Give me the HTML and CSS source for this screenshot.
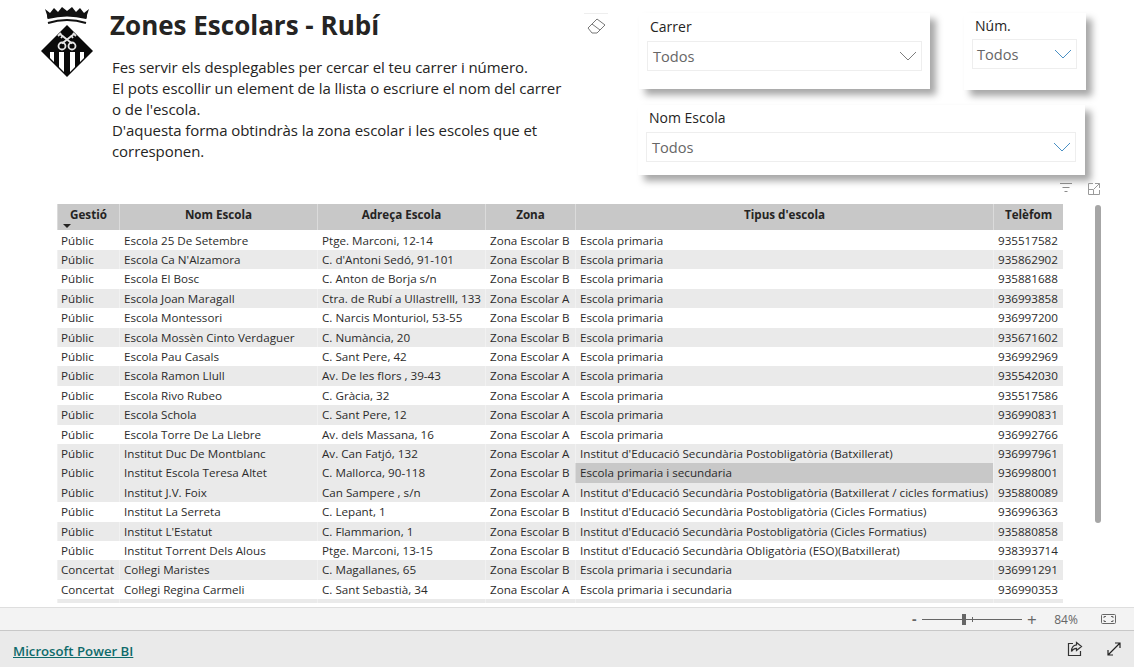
FILE: index.html
```html
<!DOCTYPE html>
<html lang="ca">
<head>
<meta charset="utf-8">
<title>Zones Escolars - Rubí</title>
<link rel="stylesheet" href="styles.css">
</head>
<body>
<main class="report">
  <section class="top">
    <svg class="logo" viewBox="0 0 52 72" width="52" height="72" aria-hidden="true">
      <path d="M6 9 L4 3 L9 7 L13 2 L17 6 L21 1 L26 5 L31 1 L35 6 L39 2 L43 7 L48 3 L46 9 Q46 13 45 13 Q26 8 7 13 Q6 13 6 9Z" fill="#111"/>
      <path d="M7 17 Q26 11 45 17" fill="none" stroke="#111" stroke-width="2"/>
      <path d="M26 19 L52 45 L26 71 L0 45Z" fill="#0a0a0a"/>
      <path d="M9 46H13V56L9 52Z M18 46H23V66L18 61Z M29 46H34V61L29 66Z M39 46H43V52L39 56Z" fill="#fff"/>
      <g fill="none" stroke="#e8e8e8" stroke-width="1.800">
        <path d="M31 37.500 L19 28 M21 37.500 L33 28"/>
        <circle cx="21" cy="40" r="3.500"/>
        <circle cx="31" cy="40" r="3.500"/>
        <path d="M17 30l3-3M35 30l-3-3M20 32l2-2.500M32 32l-2-2.500"/>
      </g>
    </svg>
    <div class="intro">
      <h1 class="title">Zones Escolars - Rubí</h1>
      <p class="lead">Fes servir els desplegables per cercar el teu carrer i número.<br>El pots escollir un element de la llista o escriure el nom del carrer<br>o de l'escola.<br>D'aquesta forma obtindràs la zona escolar i les escoles que et<br>corresponen.</p>
    </div>
    <div class="eraser">
      <svg viewBox="0 0 22 20" width="22" height="20" aria-hidden="true"><path d="M3 12 L12 3 L20 9 L12 17 H7Z M7 8 L15 14" fill="none" stroke="#777" stroke-width="1"/></svg>
    </div>
    <div class="slicers">
      <div class="slicer s-carrer">
        <div class="s-label">Carrer</div>
        <div class="s-box"><span>Todos</span><svg class="chev" viewBox="0 0 18 10" width="18" height="10" aria-hidden="true"><path d="M1 1 L9 9 L17 1" fill="none" stroke="#7d7d7d"/></svg></div>
      </div>
      <div class="slicer s-num">
        <div class="s-label">Núm.</div>
        <div class="s-box"><span>Todos</span><svg class="chev" viewBox="0 0 18 10" width="18" height="10" aria-hidden="true"><path d="M1 1 L9 9 L17 1" fill="none" stroke="#4a90c4"/></svg></div>
      </div>
      <div class="slicer s-nom">
        <div class="s-label">Nom Escola</div>
        <div class="s-box"><span>Todos</span><svg class="chev" viewBox="0 0 18 10" width="18" height="10" aria-hidden="true"><path d="M1 1 L9 9 L17 1" fill="none" stroke="#4a90c4"/></svg></div>
      </div>
    </div>
  </section>
  <div class="tools">
    <svg viewBox="0 0 14 12" width="14" height="12" aria-hidden="true"><path d="M1 1.500h12M3.500 5.500h7M5.500 9.500h3" stroke="#8a8a8a" fill="none"/></svg>
    <svg viewBox="0 0 14 14" width="14" height="14" aria-hidden="true"><path d="M6 1.500H1.500v11h11V8M8 1.500h4.500V6M12.500 1.500L7 7M1.500 7.500H6.500V12.500" stroke="#9a9a9a" fill="none"/></svg>
  </div>
  <section class="table-area">
    <div class="table">
      <div class="row head"><div class="c">Gestió<i class="sort"></i></div><div class="c">Nom Escola</div><div class="c">Adreça Escola</div><div class="c">Zona</div><div class="c">Tipus d'escola</div><div class="c">Telèfom</div></div>
      <div class="row"><div class="c">Públic</div><div class="c">Escola 25 De Setembre</div><div class="c">Ptge. Marconi, 12-14</div><div class="c">Zona Escolar B</div><div class="c">Escola primaria</div><div class="c">935517582</div></div>
      <div class="row"><div class="c">Públic</div><div class="c">Escola Ca N'Alzamora</div><div class="c">C. d'Antoni Sedó, 91-101</div><div class="c">Zona Escolar B</div><div class="c">Escola primaria</div><div class="c">935862902</div></div>
      <div class="row"><div class="c">Públic</div><div class="c">Escola El Bosc</div><div class="c">C. Anton de Borja s/n</div><div class="c">Zona Escolar B</div><div class="c">Escola primaria</div><div class="c">935881688</div></div>
      <div class="row"><div class="c">Públic</div><div class="c">Escola Joan Maragall</div><div class="c">Ctra. de Rubí a Ullastrelll, 133</div><div class="c">Zona Escolar A</div><div class="c">Escola primaria</div><div class="c">936993858</div></div>
      <div class="row"><div class="c">Públic</div><div class="c">Escola Montessori</div><div class="c">C. Narcis Monturiol, 53-55</div><div class="c">Zona Escolar B</div><div class="c">Escola primaria</div><div class="c">936997200</div></div>
      <div class="row"><div class="c">Públic</div><div class="c">Escola Mossèn Cinto Verdaguer</div><div class="c">C. Numància, 20</div><div class="c">Zona Escolar B</div><div class="c">Escola primaria</div><div class="c">935671602</div></div>
      <div class="row"><div class="c">Públic</div><div class="c">Escola Pau Casals</div><div class="c">C. Sant Pere, 42</div><div class="c">Zona Escolar A</div><div class="c">Escola primaria</div><div class="c">936992969</div></div>
      <div class="row"><div class="c">Públic</div><div class="c">Escola Ramon Llull</div><div class="c">Av. De les flors , 39-43</div><div class="c">Zona Escolar A</div><div class="c">Escola primaria</div><div class="c">935542030</div></div>
      <div class="row"><div class="c">Públic</div><div class="c">Escola Rivo Rubeo</div><div class="c">C. Gràcia, 32</div><div class="c">Zona Escolar A</div><div class="c">Escola primaria</div><div class="c">935517586</div></div>
      <div class="row"><div class="c">Públic</div><div class="c">Escola Schola</div><div class="c">C. Sant Pere, 12</div><div class="c">Zona Escolar A</div><div class="c">Escola primaria</div><div class="c">936990831</div></div>
      <div class="row"><div class="c">Públic</div><div class="c">Escola Torre De La Llebre</div><div class="c">Av. dels Massana, 16</div><div class="c">Zona Escolar A</div><div class="c">Escola primaria</div><div class="c">936992766</div></div>
      <div class="row"><div class="c">Públic</div><div class="c">Institut Duc De Montblanc</div><div class="c">Av. Can Fatjó, 132</div><div class="c">Zona Escolar A</div><div class="c">Institut d'Educació Secundària Postobligatòria (Batxillerat)</div><div class="c">936997961</div></div>
      <div class="row hover"><div class="c">Públic</div><div class="c">Institut Escola Teresa Altet</div><div class="c">C. Mallorca, 90-118</div><div class="c">Zona Escolar B</div><div class="c hot">Escola primaria i secundaria</div><div class="c">936998001</div></div>
      <div class="row"><div class="c">Públic</div><div class="c">Institut J.V. Foix</div><div class="c">Can Sampere , s/n</div><div class="c">Zona Escolar A</div><div class="c">Institut d'Educació Secundària Postobligatòria (Batxillerat / cicles formatius)</div><div class="c">935880089</div></div>
      <div class="row"><div class="c">Públic</div><div class="c">Institut La Serreta</div><div class="c">C. Lepant, 1</div><div class="c">Zona Escolar B</div><div class="c">Institut d'Educació Secundària Postobligatòria (Cicles Formatius)</div><div class="c">936996363</div></div>
      <div class="row"><div class="c">Públic</div><div class="c">Institut L'Estatut</div><div class="c">C. Flammarion, 1</div><div class="c">Zona Escolar B</div><div class="c">Institut d'Educació Secundària Postobligatòria (Cicles Formatius)</div><div class="c">935880858</div></div>
      <div class="row"><div class="c">Públic</div><div class="c">Institut Torrent Dels Alous</div><div class="c">Ptge. Marconi, 13-15</div><div class="c">Zona Escolar B</div><div class="c">Institut d'Educació Secundària Obligatòria (ESO)(Batxillerat)</div><div class="c">938393714</div></div>
      <div class="row"><div class="c">Concertat</div><div class="c">Col·legi Maristes</div><div class="c">C. Magallanes, 65</div><div class="c">Zona Escolar B</div><div class="c">Escola primaria i secundaria</div><div class="c">936991291</div></div>
      <div class="row"><div class="c">Concertat</div><div class="c">Col·legi Regina Carmeli</div><div class="c">C. Sant Sebastià, 34</div><div class="c">Zona Escolar A</div><div class="c">Escola primaria i secundaria</div><div class="c">936990353</div></div>
      <div class="row stub"><div class="c"></div><div class="c"></div><div class="c"></div><div class="c"></div><div class="c"></div><div class="c"></div></div>
    </div>
    <div class="scrollbar"></div>
  </section>
</main>
<div class="zoombar">
  <span class="minus">-</span>
  <div class="track"><i class="thumb"></i><i class="tick"></i></div>
  <span class="plus">+</span>
  <span class="pct">84%</span>
  <svg class="fit" viewBox="0 0 15 10" width="15" height="10" aria-hidden="true"><rect x="0.500" y="0.500" width="14" height="9" rx="1" fill="none" stroke="#666"/><path d="M3 4V2.500H5M10 2.500H12V4M12 6V7.500H10M5 7.500H3V6" fill="none" stroke="#666"/></svg>
</div>
<footer class="footer">
  <a class="brand" href="#">Microsoft Power BI</a>
  <div class="foot-icons">
    <svg viewBox="0 0 16 16" width="16" height="16" aria-hidden="true"><path d="M6 2.500H1.500V14.500H13.500V10" fill="none" stroke="#333" stroke-width="1.200"/><path d="M9.500 1.500L14.500 5.500L9.500 9.500V7.300C7 7.300 5.500 8.500 4.500 10.500C4.500 7 6.500 4.300 9.500 3.900Z" fill="none" stroke="#333" stroke-width="1.200"/></svg>
    <svg viewBox="0 0 14 14" width="14" height="14" aria-hidden="true"><path d="M8 1H13V6M13 1L1 13M1 8V13H6" fill="none" stroke="#222" stroke-width="1.200"/></svg>
  </div>
</footer>
</body>
</html>
```
FILE: styles.css
```css
* { box-sizing: border-box; }
html, body { margin: 0; padding: 0; }
body {
  width: 1134px;
  height: 667px;
  overflow: hidden;
  background: #fff;
  color: #252423;
  font-family: "Open Sans", "Noto Sans", "Liberation Sans", sans-serif;
  display: flex;
  flex-direction: column;
}
.report { height: 607px; overflow: hidden; }
.top { display: flex; height: 180px; align-items: flex-start; }
.logo { margin: 6px 0 0 41px; flex: none; }
.intro { width: 474px; margin-left: 17px; flex: none; }
.title {
  margin: 7px 0 0;
  font-size: 26px;
  line-height: 36px;
  font-weight: 700;
  color: #252423;
  white-space: nowrap;
}
.lead {
  margin: 14px 0 0 2px;
  font-size: 15px;
  line-height: 21px;
  letter-spacing: -0.07px;
  white-space: nowrap;
}
.eraser {
  width: 24px;
  margin-top: 13px;
  padding: 2px 0 0 1px;
  border-top: 1px solid #eee;
  flex: none;
}
.slicers {
  margin: 13px 0 0 31px;
  width: 447px;
  display: grid;
  grid-template-columns: 291px 122px;
  column-gap: 34px;
  row-gap: 15px;
  flex: none;
}
.slicer {
  background: #fff;
  box-shadow: 6px 6px 7px rgba(0,0,0,.35);
}
.s-carrer { height: 76px; padding: 4px 8px 0 8px; }
.s-num { height: 77px; padding: 3px 9px 0 8px; }
.s-nom { grid-column: 1 / 3; height: 70px; padding: 3px 9px 0 8px; margin-left: -1px; margin-right: 1px; }
.s-label { font-size: 14px; line-height: 20px; margin-left: 3px; color: #252423; }
.s-box {
  margin-top: 4px;
  height: 30px;
  border: 1px solid #eeeeee;
  display: flex;
  align-items: center;
  justify-content: space-between;
  padding: 0 3px 0 5px;
  font-size: 14.6px;
  color: #666;
}
.s-num .s-box { margin-top: 3px; padding-left: 4px; }
.chev { margin-right: 1px; }
.tools {
  height: 24px;
  display: flex;
  justify-content: flex-end;
  align-items: flex-start;
  gap: 14px;
  padding: 2px 33px 0 0;
}
.table-area { display: flex; align-items: flex-start; padding-left: 57px; }
.table { width: 1006px; font-size: 11.65px; color: #2b2b2b; }
.row {
  display: grid;
  grid-template-columns: 62px 198px 168px 90px 418px 70px;
  height: 19.4px;
  line-height: 19.4px;
}
.row:nth-child(odd) { background: #eaeaea; }
.c {
  padding-left: 4px;
  white-space: nowrap;
  overflow: hidden;
  border-left: 1px solid rgba(255,255,255,.35);
}
.row > .c:first-child { padding-left: 3px; }
.head { height: 26px; line-height: 21px; background: #c8c8c8 !important; font-weight: 700; color: #252423; margin-bottom: 0.7px; }
.head .c, .row.head > .c:first-child { text-align: center; padding-left: 0; position: relative; }
.sort {
  position: absolute;
  left: 5px;
  bottom: 2px;
  border: 4px solid transparent;
  border-top: 4px solid #252423;
  border-bottom: 0;
}
.row.hover { background: #eaeaea; }
.hot { background: #c8c8c8; }
.stub { height: 4px; }
.scrollbar {
  width: 6px;
  height: 318px;
  margin: 1px 0 0 32px;
  background: #a6a6a6;
  border-radius: 3px;
}
.zoombar {
  height: 23px;
  background: #f3f3f3;
  border-top: 1px solid #dedede;
  display: flex;
  align-items: center;
  padding-left: 912px;
  font-size: 12px;
  color: #666;
}
.minus { width: 10px; font-size: 14px; font-weight: 700; line-height: 1; }
.track {
  width: 100px;
  height: 1px;
  background: #666;
  position: relative;
}
.thumb { position: absolute; left: 40px; top: -5px; width: 4px; height: 11px; background: #666; }
.tick { position: absolute; left: 50px; top: -2px; width: 1px; height: 5px; background: #666; }
.plus { margin-left: 5px; font-size: 17px; width: 16px; line-height: 1; }
.pct { width: 44px; text-align: center; margin-left: 1px; }
.fit { margin-left: 13px; }
.footer {
  height: 37px;
  background: #eaeaea;
  border-top: 1px solid #c8c8c8;
  display: flex;
  align-items: center;
  justify-content: space-between;
  padding: 0 13px;
}
.brand { color: #0f6a6b; font-size: 13.2px; font-weight: 600; text-decoration: underline; margin-top: 3px; }
.foot-icons { display: flex; gap: 24px; align-items: center; }
```
